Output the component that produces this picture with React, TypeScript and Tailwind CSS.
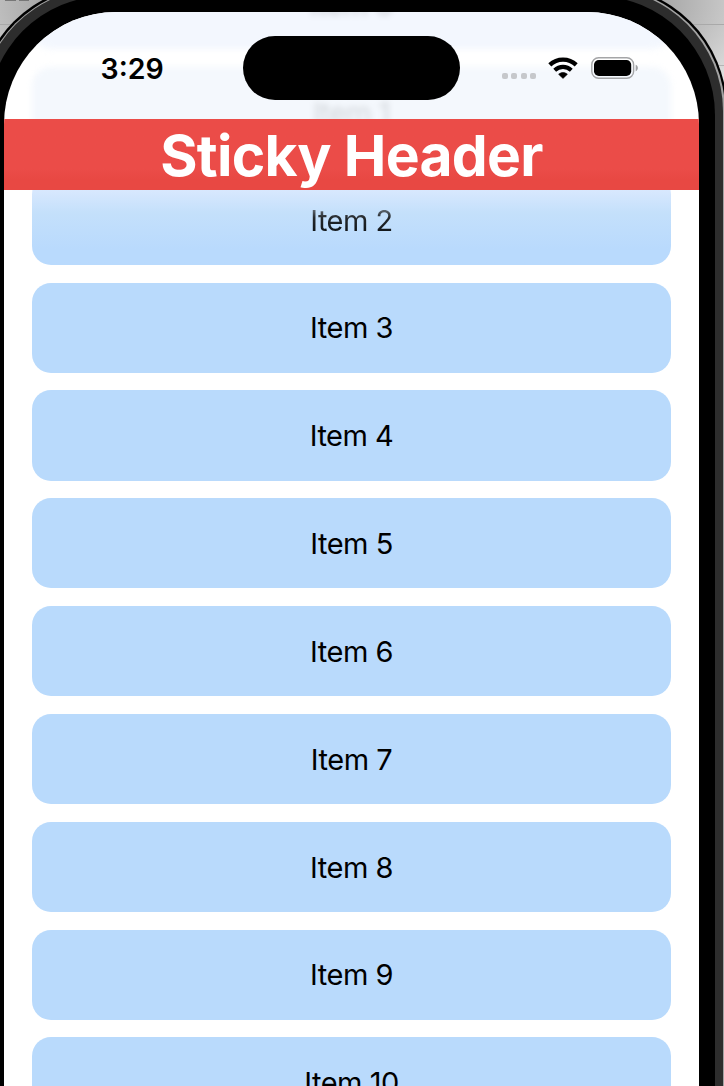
import clsx from 'clsx';

const items = Array.from({ length: 11 }, (_, i) => i);

function WifiIcon() {
  return (
    <svg width="30" height="22" viewBox="0 0 30 22" className="shrink-0">
      <path d="M15 21.4 L10.6 17.3 C13 15 17 15 19.4 17.3 Z" fill="#000" stroke="#000" strokeWidth="0.6" strokeLinejoin="round" />
      <path d="M6.7 13.2 C11.4 8.8 18.6 8.8 23.3 13.2" fill="none" stroke="#000" strokeWidth="4.1" />
      <path d="M1.8 7.9 C9.2 0.8 20.8 0.8 28.2 7.9" fill="none" stroke="#000" strokeWidth="4.3" />
    </svg>
  );
}

function BatteryIcon() {
  return (
    <svg width="48" height="22" viewBox="0 0 48 22" className="shrink-0">
      <rect x="0.8" y="0.8" width="41.8" height="20.4" rx="6.8" fill="none" stroke="#a4a5a7" strokeWidth="1.4" />
      <rect x="3" y="3" width="37.2" height="16" rx="4.8" fill="#000" />
      <path d="M44.7 7.8 C47.6 8.8 47.6 13.2 44.7 14.2 Z" fill="#a0a1a3" />
    </svg>
  );
}

function StatusBar() {
  return (
    <div className="flex h-[107.4px] pt-[24px]">
      <div className="w-[239px] shrink-0 pl-[96.5px] pt-[12px] text-[28.5px] leading-[42px] font-semibold">3:29</div>
      <div className="h-[63.5px] w-[217px] shrink-0 rounded-[32px] bg-black" />
      <div className="mt-[21px] flex h-[22px] pl-[42px]">
        <div className="flex gap-[3.2px] pt-[16px]">
          {[0, 1, 2, 3].map(dot => (
            <span key={dot} className="size-[6.1px] rounded-[2px] bg-[#c6c8cb]" />
          ))}
        </div>
        <div className="ml-[12px]">
          <WifiIcon />
        </div>
        <div className="ml-[13px]">
          <BatteryIcon />
        </div>
      </div>
    </div>
  );
}

function Row({ index }: { index: number }) {
  return (
    <div
      className={clsx(
        'flex h-[90.2px] shrink-0 items-center justify-center rounded-[19px] pt-[1.6px]',
        index === 0 && 'bg-[#f3f7fe] blur-[3px]',
        index === 1 && 'bg-[#f4f8fd] blur-[3px]',
        index === 2 && 'bg-linear-to-b from-[#d8e8fe] from-[17%] via-[#c4e0fb] via-[42%] to-[#b9dafd] to-[82%]',
        index > 2 && 'bg-[#b9dafc]'
      )}
    >
      <span
        className={clsx(
          'text-[29px] leading-[40px] tracking-[-0.5px]',
          index === 0 && 'text-black/20',
          index === 1 && 'text-black/15',
          index === 2 && 'bg-linear-to-b from-[#66707a] from-[20%] via-[#24282c] via-[42%] to-[#12171b] to-[75%] bg-clip-text text-transparent'
        )}
      >
        Item {index}
      </span>
    </div>
  );
}

export default function App() {
  return (
    <div className="h-[1086px] w-[724px] overflow-hidden bg-[#d2d2d2] font-[Inter,'Liberation_Sans',sans-serif] text-black">
      {/* Desktop behind the phone */}
      <div className="h-[1086px] bg-[radial-gradient(ellipse_420px_160px_at_352px_0px,#8a8a8a_60%,#dedede_100%)]">
        <div className="flex h-[25px] border-b border-[#a9a9a9]">
          <div className="flex gap-[3px] pl-[5px]">
            <span className="h-[1px] w-[11px] bg-[#777777]" />
            <span className="h-[1px] w-[10px] bg-[#777777]" />
          </div>
        </div>
        <div className="h-[41px] border-b border-[#b4b4b4]" />

        {/* Phone bezel, from the outer edge inwards */}
        <div className="mt-[-81.5px] ml-[-23.5px] w-[750px] rounded-[125px] bg-black p-[2px]">
          <div className="rounded-[124px] bg-[#a3a3a3] p-[1.5px]">
            <div className="rounded-[123px] bg-[#2d2d2d] p-[8px]">
              <div className="rounded-[119px] bg-black p-[16px]">
                <div className="relative h-[1200px] overflow-hidden rounded-[112px] bg-white">
                  <div className="mt-[-53px] flex flex-col gap-[17.66px] px-[28px]">
                    {items.map(index => (
                      <Row key={index} index={index} />
                    ))}
                  </div>

                  {/* Pinned header */}
                  <div className="absolute inset-x-0 top-0">
                    <StatusBar />
                    <div className="flex h-[70.2px] items-center justify-center bg-linear-to-b from-[#eb4c48] from-[70%] to-[#e84843] to-[85%] pt-[3px] text-[57px] leading-[70px] font-bold tracking-[-0.7px] text-white">
                      Sticky Header
                    </div>
                  </div>
                </div>
              </div>
            </div>
          </div>
        </div>
      </div>
    </div>
  );
}
